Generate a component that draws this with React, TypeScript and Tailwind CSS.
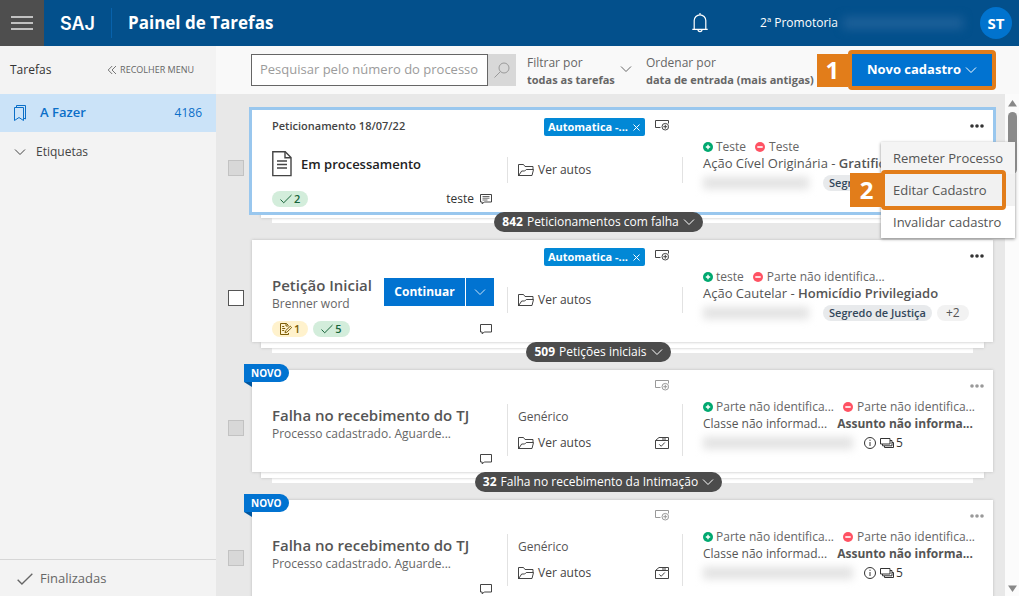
import React, { useState } from 'react';

interface Task {
  id: number;
  header?: string;
  title: string;
  subtitle?: string;
  kind: 'processing' | 'draft' | 'failed';
  isNew?: boolean;
  tag?: string;
  pending?: number;
  done?: number;
  note?: string;
  category?: string;
  active: string;
  passive: string;
  className: string;
  subject: string;
  secret?: boolean;
  extra?: string;
  related?: number;
  stack?: { count: string; label: string };
}

const failedTask = {
  title: 'Falha no recebimento do TJ',
  subtitle: 'Processo cadastrado. Aguarde...',
  kind: 'failed' as const,
  isNew: true,
  category: 'Genérico',
  active: 'Parte não identifica...',
  passive: 'Parte não identifica...',
  className: 'Classe não informad...',
  subject: 'Assunto não informa...',
  related: 5,
};

const tasks: Task[] = [
  {
    id: 1,
    header: 'Peticionamento 18/07/22',
    title: 'Em processamento',
    kind: 'processing',
    tag: 'Automatica -...',
    done: 2,
    note: 'teste',
    active: 'Teste',
    passive: 'Teste',
    className: 'Ação Cível Originária -',
    subject: 'Gratific',
    secret: true,
    stack: { count: '842', label: 'Peticionamentos com falha' },
  },
  {
    id: 2,
    title: 'Petição Inicial',
    subtitle: 'Brenner word',
    kind: 'draft',
    tag: 'Automatica -...',
    pending: 1,
    done: 5,
    active: 'teste',
    passive: 'Parte não identifica...',
    className: 'Ação Cautelar -',
    subject: 'Homicídio Privilegiado',
    secret: true,
    extra: '+2',
    stack: { count: '509', label: 'Petições iniciais' },
  },
  { id: 3, ...failedTask, stack: { count: '32', label: 'Falha no recebimento da Intimação' } },
  { id: 4, ...failedTask },
];

const ChevronDown = ({ className = '' }: { className?: string }) => (
  <svg className={`w-3 h-3 shrink-0 ${className}`} viewBox="0 0 12 12" fill="none" stroke="currentColor"><path d="M1 3.5l5 5 5-5" /></svg>
);

const CheckIcon = ({ className = 'w-3 h-3' }: { className?: string }) => (
  <svg className={className} viewBox="0 0 12 12" fill="none" stroke="currentColor"><path d="M.5 6.5l3.2 3.3L11.5 2" /></svg>
);

const FolderIcon = () => (
  <svg className="w-4 h-4 shrink-0" viewBox="0 0 16 16" fill="none" stroke="currentColor"><path d="M.5 14V2.5h5l1.500 2h8v3M.7 13.500l3-4.500h3l1.500-1.500h7.300l-1.500 6H.7z" /></svg>
);

const ChatIcon = ({ lines }: { lines?: boolean }) => (
  <svg className="w-3 h-3 shrink-0 text-[#444]" viewBox="0 0 12 12" fill="none" stroke="currentColor">
    <path d="M.5 1.5h11v7.5H4.2L2.2 11V9H.5z" />
    {lines && <path d="M2.5 3.5h7M2.5 5.2h7M2.5 7h5" strokeWidth=".8" />}
  </svg>
);

const AddTagIcon = () => (
  <svg className="w-[14px] h-3" viewBox="0 0 14 12" fill="none" stroke="currentColor">
    <path d="M5.5 8.5h-5v-7h13v3" />
    <circle cx="10.3" cy="7.7" r="3.3" />
    <path d="M8.3 7.7h4M10.3 5.7v4" />
  </svg>
);

const DocumentIcon = () => (
  <svg className="w-5 h-[26px] shrink-0 text-[#444]" viewBox="0 0 20 26" fill="none" stroke="currentColor" strokeWidth="1.4">
    <path d="M.8.8h12.4l5.8 5.8v18H.8z" />
    <path d="M13 .8v6h6" />
    <path d="M5 10h10M5 13.5h10M5 17h10" />
  </svg>
);

const EditNoteIcon = () => (
  <svg className="w-3 h-3" viewBox="0 0 12 12" fill="none" stroke="currentColor">
    <path d="M8.5 2.5l-2-2h-6v11h8V10M6 .5v2.5h2.5M2.2 3.5h2M2.2 5.5h3M2.2 7.5h2" />
    <path d="M5 9.8l.5-2 4.8-4.6 1.3 1.4L6.9 9.2z" />
  </svg>
);

const ChecklistFolderIcon = () => (
  <svg className="w-[14px] h-3" viewBox="0 0 14 12" fill="none" stroke="currentColor">
    <path d="M.5 3.5h13v8H.5zM.5 3.5L4 .5h9.500v3M7 2h4M4.2 7.3l2 2 3.6-3.8" />
  </svg>
);

const PlusDot = () => (
  <svg className="w-[10px] h-[10px] shrink-0" viewBox="0 0 10 10"><circle cx="5" cy="5" r="5" fill="#00a86f" /><path d="M2.8 5h4.4M5 2.8v4.4" stroke="#fff" strokeWidth="1.4" /></svg>
);

const MinusDot = () => (
  <svg className="w-[10px] h-[10px] shrink-0" viewBox="0 0 10 10"><circle cx="5" cy="5" r="5" fill="#ff5263" /><path d="M2.3 5h5.4" stroke="#fff" strokeWidth="1.6" /></svg>
);

const Header = () => (
  <header className="h-[46px] shrink-0 flex items-center bg-[#03508c] text-white">
    <button aria-label="Menu" className="w-11 h-full flex items-center justify-center bg-[#4e4e4e]">
      <svg className="w-[22px] h-4" viewBox="0 0 22 16" stroke="#e8e8e8" strokeWidth="1.4"><path d="M0 2h22M0 8h22M0 14h22" /></svg>
    </button>
    <span className="w-[67px] text-center font-[Inter] text-[18px] font-semibold">SAJ</span>
    <h1 className="h-[30px] flex items-center pl-4 border-l border-[#0862ab] text-[17px] font-bold">Painel de Tarefas</h1>
    <button aria-label="Notificações" className="ml-auto">
      <svg className="w-4 h-5" viewBox="0 0 16 20" fill="none" stroke="currentColor" strokeWidth="1.2">
        <path d="M.3 16.4h15.4M2.2 16.4V7.6a5.8 5.8 0 0111.6 0v8.8M8 1.8V0M6 16.6a2 2 0 004 0" />
      </svg>
    </button>
    <span className="ml-[52px] text-[12px]">2ª Promotoria</span>
    <span className="ml-[5px] w-[120px] h-3 bg-[#1d6099] blur-[5px]" />
    <span className="ml-[17px] mr-[7px] w-8 h-8 rounded-full bg-[#0173ce] flex items-center justify-center text-[15px] font-bold">ST</span>
  </header>
);

const Sidebar = () => (
  <aside className="w-[216px] shrink-0 flex flex-col bg-[#f3f3f3] text-[#444]">
    <div className="h-12 shrink-0 flex items-center px-[10px]">
      <h2 className="text-[12px] font-medium text-[#333]">Tarefas</h2>
      <button className="ml-auto mr-3 flex items-center gap-1 text-[9px] font-medium text-[#666]">
        <svg className="w-2 h-2" viewBox="0 0 8 8" fill="none" stroke="currentColor" strokeWidth=".9"><path d="M4.2 0l-4 4 4 4M8 0L4 4l4 4" /></svg>
        RECOLHER MENU
      </button>
    </div>
    <nav className="flex-1 flex flex-col">
      <a href="#fazer" className="h-[38px] flex items-center px-[14px] bg-[#cbe3f8] text-[#0b6fc8] font-semibold">
        <svg className="w-3 h-4" viewBox="0 0 12 16" fill="none" stroke="currentColor">
          <path d="M.5 2.5h9v13l-4.500-3-4.500 3z" />
          <path d="M2.500 2.500V.5h9v13.500l-2-1" />
        </svg>
        <span className="ml-[14px] text-[13px]">A Fazer</span>
        <span className="ml-auto text-[12px] font-medium">4186</span>
      </a>
      <a href="#etiquetas" className="h-10 flex items-center gap-[10px] pl-[14px] text-[12px] font-medium">
        <ChevronDown />
        Etiquetas
      </a>
      <a href="#finalizadas" className="mt-auto h-[37px] pt-px flex items-center gap-[7px] pl-[17px] border-t border-[#d6d6d6] text-[13px] text-[#666]">
        <CheckIcon className="w-4 h-4" />
        Finalizadas
      </a>
    </nav>
  </aside>
);

const Toolbar = () => (
  <div className="h-12 shrink-0 flex items-center pl-[35px] bg-[#f9f9f9] text-[12px] text-[#666]">
    <form className="flex h-8">
      <input
        type="text"
        aria-label="Pesquisar"
        placeholder="Pesquisar pelo número do processo"
        className="w-[237px] px-2 border border-[#666] bg-white text-[13px] placeholder:text-[#9b9b9b] focus:outline-none"
      />
      <button type="button" aria-label="Buscar" className="w-7 flex items-center justify-center bg-[#d8d8d8] text-[#9a9a9a]">
        <svg className="w-4 h-4" viewBox="0 0 16 16" fill="none" stroke="currentColor"><circle cx="10" cy="6" r="5" /><path d="M6.500 9.500L.5 15.500" /></svg>
      </button>
    </form>
    <div className="relative ml-[11px] pt-1 w-[105px]">
      <label htmlFor="filtro" className="block h-4 leading-4">Filtrar por</label>
      <select id="filtro" className="block w-full h-[18px] appearance-none bg-transparent text-[11px] leading-[18px] font-bold">
        <option>todas as tarefas</option>
      </select>
      <ChevronDown className="absolute right-0 top-3" />
    </div>
    <div className="ml-[14px] pt-1 min-w-0 flex-1">
      <label htmlFor="ordem" className="block h-4 leading-4">Ordenar por</label>
      <select id="ordem" className="block w-full h-[18px] appearance-none bg-transparent text-[11px] leading-[18px] font-bold">
        <option>data de entrada (mais antigas)</option>
      </select>
    </div>
    <div className="shrink-0 mr-[23px] flex items-center">
      <span className="w-[31px] h-[33px] flex items-center justify-center bg-[#e27d1a] text-white text-[24px] font-bold">1</span>
      <button className="h-10 px-[15px] flex items-center gap-1 border-4 border-[#e27d1a] rounded-sm bg-[#0173d1] text-white text-[13px] font-bold">
        Novo cadastro
        <ChevronDown />
      </button>
    </div>
  </div>
);

const TaskSummary: React.FC<{ task: Task }> = ({ task }) => (
  <div className="pl-5 pr-[13px] flex flex-col">
    <div className="h-8 flex items-center text-[11px] font-semibold text-[#444]">{task.header}</div>
    <div className="h-11 flex items-center">
      {task.kind === 'processing' && <DocumentIcon />}
      <div className={task.kind === 'processing' ? 'ml-[9px]' : ''}>
        <h3 className={task.kind === 'processing' ? 'text-[13px] leading-5 font-semibold text-[#222]' : 'text-[15px] leading-5 font-semibold text-[#555] whitespace-nowrap'}>{task.title}</h3>
        {task.subtitle && <p className="text-[12px] leading-[18px] text-[#666] whitespace-nowrap">{task.subtitle}</p>}
      </div>
      {task.kind === 'draft' && (
        <div className="ml-auto mb-1 flex gap-px h-7 text-white">
          <button className="w-[81px] bg-[#0173d1] text-[12px] font-bold">Continuar</button>
          <button aria-label="Mais opções" className="w-7 flex items-center justify-center bg-[#0173d1]"><ChevronDown className="opacity-80" /></button>
        </div>
      )}
    </div>
    <div className="h-[26px] pr-0.5 flex items-center gap-[5px] text-[11px]">
      {task.pending && (
        <span className="h-4 px-2 flex items-center gap-0.5 rounded-full bg-[#fff2cd] text-[#7d5d06] font-semibold"><EditNoteIcon />{task.pending}</span>
      )}
      {task.done && (
        <span className="h-4 px-2 flex items-center gap-0.5 rounded-full bg-[#d3eddb] text-[#17643a] font-semibold"><CheckIcon />{task.done}</span>
      )}
      <span className="ml-auto flex items-center gap-[6px] text-[12px] text-[#333]">
        {task.note}
        <ChatIcon lines={!!task.note} />
      </span>
    </div>
  </div>
);

const TaskFiles: React.FC<{ task: Task }> = ({ task }) => (
  <div className="flex flex-col">
    <div className="h-[34px] pr-[14px] flex items-center justify-end gap-[10px]">
      {task.tag && (
        <span className="h-[18px] pl-1 pr-[5px] flex items-center gap-[5px] rounded-xs bg-[#0288d6] text-white text-[11px] font-bold">
          {task.tag}
          <button aria-label="Remover etiqueta"><svg className="w-[7px] h-[7px]" viewBox="0 0 7 7" stroke="currentColor"><path d="M.5.5l6 6M6.500.5l-6 6" /></svg></button>
        </span>
      )}
      <button aria-label="Adicionar etiqueta" className={task.kind === 'failed' ? 'text-[#999] pb-1' : 'text-[#444] pb-1'}><AddTagIcon /></button>
    </div>
    <div className="h-[52px] flex flex-col justify-center">
      <div className="pl-[10px] pr-[13px] border-x border-[#e2e2e2] text-[12px] text-[#444]">
        {task.category && <p className="h-[26px] leading-[26px] text-[#555]">{task.category}</p>}
        <div className="h-[26px] flex items-center">
          <a href="#autos" className="flex items-center gap-1">
            <FolderIcon />
            Ver autos
          </a>
          {task.category && <button aria-label="Conferir" className="ml-auto"><ChecklistFolderIcon /></button>}
        </div>
      </div>
    </div>
  </div>
);

const TaskParties: React.FC<{ task: Task }> = ({ task }) => {
  const failed = task.kind === 'failed';
  return (
    <div className="pl-5 flex flex-col min-w-0 text-[#555] whitespace-nowrap">
      <div className="h-7 pt-1 pr-[9px] flex items-center justify-end">
        <button aria-label="Opções" className={failed ? 'text-[#999]' : 'text-[#333]'}>
          <svg className="w-[14px] h-1" viewBox="0 0 14 4" fill="currentColor"><circle cx="2" cy="2" r="1.800" /><circle cx="7" cy="2" r="1.800" /><circle cx="12" cy="2" r="1.800" /></svg>
        </button>
      </div>
      <div className="h-[17px] flex items-center text-[12px] text-[#666]">
        <span className="flex items-center gap-[3px]"><PlusDot />{task.active}</span>
        <span className="ml-[9px] flex items-center gap-1"><MinusDot />{task.passive}</span>
      </div>
      <p className={failed ? 'h-[17px] leading-[17px] text-[12px]' : 'h-[17px] leading-[17px] text-[13px]'}>
        {task.className} <strong className={failed ? 'font-bold ml-[7px]' : 'font-semibold'}>{task.subject}</strong>
      </p>
      <div className="h-[22px] flex items-center text-[11px]">
        <span className={failed ? 'w-[150px] mr-[11px] h-3 bg-[#e2e2e2] blur-xs' : 'w-[106px] mr-[14px] h-3 bg-[#e2e2e2] blur-xs'} />
        {task.secret && <span className="h-4 px-[6px] leading-4 rounded-full bg-[#e8eaec] text-[#33475b] font-semibold">Segredo de Justiça</span>}
        {task.extra && <span className="ml-[5px] h-4 px-[9px] leading-4 rounded-full bg-[#f2f2f2] text-[12px] font-medium">{task.extra}</span>}
        {task.related && (
          <span className="flex items-center gap-1 text-[12px] text-[#333]">
            <svg className="w-3 h-3" viewBox="0 0 12 12" fill="none" stroke="currentColor"><circle cx="6" cy="6" r="5.500" /><path d="M6 5v4M6 2.700v1.200" /></svg>
            <span className="flex items-center gap-0.5">
              <svg className="w-[14px] h-[10px]" viewBox="0 0 14 10" fill="none" stroke="currentColor"><path d="M.5.5h9.500v5.500H.5zM2.500 6v1.800h9.500V2.500H10M4.500 8v1.500h9V4.500H12" /></svg>
              {task.related}
            </span>
          </span>
        )}
      </div>
    </div>
  );
};

const TaskCard: React.FC<{ task: Task; selected: boolean; onSelect: () => void }> = ({ task, selected, onSelect }) => (
  <li className="flex gap-2">
    <input
      type="checkbox"
      aria-label={task.title}
      disabled={task.kind !== 'draft'}
      className="appearance-none mt-[50px] w-4 h-4 shrink-0 border border-[#555] bg-white checked:bg-[#0173d1] disabled:bg-[#d8d8d8] disabled:border-[#c2c2c2]"
    />
    <div className="relative flex-1 min-w-0">
      <article
        onClick={onSelect}
        className={selected
          ? 'relative h-[102px] grid grid-cols-[255fr_176fr_310fr] bg-white ring-3 ring-[#99c7ee] z-10'
          : 'relative h-[102px] grid grid-cols-[255fr_176fr_310fr] bg-white shadow-[0_0_3px_#bbb] z-10'}
      >
        <TaskSummary task={task} />
        <TaskFiles task={task} />
        <TaskParties task={task} />
      </article>
      {task.stack && (
        <>
          <div className="relative mx-[9px] h-[6px] bg-white shadow-[0_0_3px_#bbb]" />
          <div className="mx-5 h-[5px] bg-white" />
          <div className="absolute inset-x-0 mr-12 top-[102px] flex justify-center z-20">
            <button className="h-5 px-2 flex items-center gap-1 rounded-full bg-[#4c4c4c] text-white text-[12px] font-medium whitespace-nowrap">
              <b>{task.stack.count}</b>
              {task.stack.label}
              <ChevronDown />
            </button>
          </div>
        </>
      )}
      {task.isNew && (
        <div className="absolute -left-2 -top-[6px] z-20">
          <span className="block h-[18px] w-[45px] pl-[7px] leading-[18px] rounded-r-full bg-[#0173d1] text-white text-[10px] font-bold">NOVO</span>
          <svg className="w-2 h-[5px]" viewBox="0 0 8 5"><path d="M0 0h8v5z" fill="#01569e" /></svg>
        </div>
      )}
    </div>
  </li>
);

const ContextMenu = () => (
  <div className="absolute right-1 top-12 z-30">
    <ul className="w-[134px] bg-white shadow-[0_1px_3px_#888] text-[13px] text-[#555]">
      <li><button className="w-full h-8 pl-3 pt-0.5 text-left bg-[#f4f4f4]">Remeter Processo</button></li>
      <li><button className="w-full h-8 pl-3 pt-0.5 text-left bg-[#f1f1f1]">Editar Cadastro</button></li>
      <li><button className="w-full h-8 pl-3 pt-0.5 text-left bg-white">Invalidar cadastro</button></li>
    </ul>
    <div className="absolute left-0 top-7 w-[125px] h-10 border-4 border-[#e27d1a] rounded-sm pointer-events-none" />
    <span className="absolute right-[132px] top-[31px] w-[33px] h-[34px] flex items-center justify-center bg-[#e27d1a] text-white text-[24px] font-bold">2</span>
  </div>
);

const Scrollbar = () => (
  <div className="w-[14px] shrink-0 flex flex-col items-center bg-[#fbfbfb]">
    <svg className="mt-[6px] ml-px w-[9px] h-[7px] shrink-0" viewBox="0 0 9 7"><path d="M4.500 0L9 6.500H0z" fill="#888" /></svg>
    <div className="mt-[5px] ml-px w-[9px] h-[62px] rounded-full bg-[#8a8a8a]" />
    <svg className="mt-auto mb-1 ml-px w-[9px] h-[7px] shrink-0" viewBox="0 0 9 7"><path d="M4.500 7L9 .5H0z" fill="#888" /></svg>
  </div>
);

const App: React.FC = () => {
  const [selectedId, setSelectedId] = useState(1);

  return (
    <div className="h-screen flex flex-col overflow-hidden font-['Open_Sans','Noto_Sans',sans-serif]">
      <Header />
      <div className="flex-1 min-h-0 flex">
        <Sidebar />
        <main className="flex-1 min-w-0 flex flex-col">
          <Toolbar />
          <div className="relative flex-1 min-h-0 flex bg-[#e8e8e8]">
            <ul className="flex-1 min-w-0 overflow-hidden px-3 pt-4 flex flex-col gap-[17px]">
              {tasks.map(task => (
                <TaskCard key={task.id} task={task} selected={task.id === selectedId} onSelect={() => setSelectedId(task.id)} />
              ))}
            </ul>
            <Scrollbar />
            <ContextMenu />
          </div>
        </main>
      </div>
    </div>
  );
};

export default App;
